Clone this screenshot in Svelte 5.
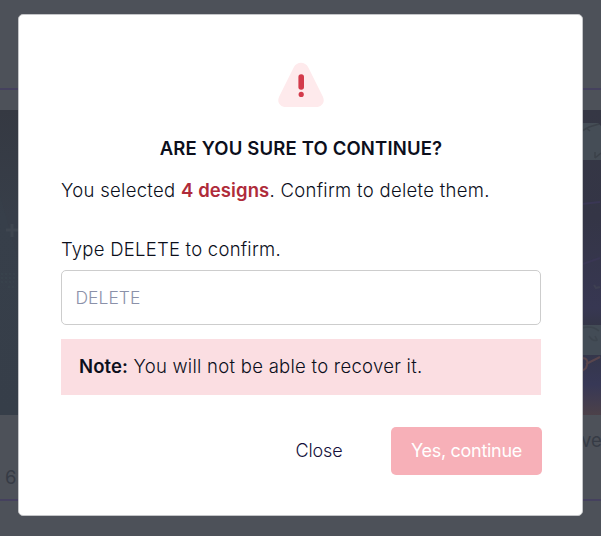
<script>
  let count = 4;
  let keyword = 'DELETE';
  let typed = '';

  $: confirmed = typed === keyword;
</script>

<div class="screen">
  <div class="page" aria-hidden="true">
    <div class="toolbar"></div>
    <div class="cards">
      <div class="card">
        <div class="thumb left">
          <svg width="20" height="305" viewBox="0 0 20 305" fill="none">
            <path d="M0 85L18 150V305H0z" fill="#3a4650" opacity=".12" />
            <path d="M6 120h12M12 114v13" stroke="#3f4650" stroke-width="3" />
            <path d="M1 164h15M1 168h15M1 172h13M8 177h8" stroke="#3a464e" stroke-dasharray="2 2" />
          </svg>
        </div>
        <div class="meta count">6</div>
      </div>
      <div class="card">
        <div class="thumb right">
          <svg width="20" height="305" viewBox="0 0 20 305" fill="none">
            <path d="M1 13h16l3 3v34H1z" fill="#454d56" />
            <path d="M1 21l7-4 10-3M5 18l4 3M20 43l-6 5M14 42v6" stroke="#3b4149" stroke-width="1.5" />
            <path d="M1 94l18-2M2 154l17-6" stroke="#3a3754" stroke-width="2" />
            <path d="M13 175l2 3 4-1" stroke="#3e4052" stroke-width="2" />
            <path d="M1 215h19v30H1z" fill="#434c56" />
            <path d="M1 218q10-3 17 3M8 226q4 6 8 4l-2-4" stroke="#3d454e" stroke-width="1.5" />
            <path d="M1 248q8 0 4 10l-4 3M5 254l14-7" stroke="#59464d" stroke-width="2" />
          </svg>
        </div>
        <div class="meta name">ve</div>
      </div>
    </div>
    <div class="bottom"></div>
  </div>

  <div class="modal" role="dialog" aria-modal="true" aria-labelledby="title">
    <svg class="warning" width="46" height="46" viewBox="0 0 46 46">
      <path d="M15.8 5.2C18.6-.8 27.4-.8 30.2 5.2L44.8 34.5C47.5 40 44 45 38 45H8C2 45-1.5 40 1.2 34.5z" fill="#feeaec" />
      <rect x="20.4" y="12.2" width="5.6" height="15.6" rx="2.7" fill="#d33b4b" />
      <circle cx="23.2" cy="32.4" r="2.6" fill="#d33b4b" />
    </svg>
    <h2 id="title">ARE YOU SURE TO CONTINUE?</h2>
    <p class="summary">You selected <strong>{count} designs</strong>. Confirm to delete them.</p>
    <label for="confirm">Type {keyword} to confirm.</label>
    <input id="confirm" type="text" placeholder={keyword} bind:value={typed} />
    <p class="note"><b>Note:</b> You will not be able to recover it.</p>
    <div class="actions">
      <button class="close" type="button">Close</button>
      <button class="submit" type="button" class:confirmed disabled={!confirmed}>Yes, continue</button>
    </div>
  </div>
</div>

<style>
  :global(body) { margin: 0; }
  .screen {
    position: relative; width: 601px; height: 536px; overflow: hidden;
    background: #4d5159;
    font-family: Inter, sans-serif; font-size: 18.5px; font-weight: 300; color: #0c0f1c;
  }
  .page { display: flex; flex-direction: column; height: 100%; }
  .toolbar { height: 88px; }
  .cards {
    display: flex; justify-content: space-between; height: 389px;
    padding-top: 20px; border-top: 2px solid #45415e; border-bottom: 2px solid #45415e;
  }
  .card { width: 20px; }
  .thumb { height: 305px; }
  .thumb svg { display: block; }
  .left { background: linear-gradient(#353942, #373e49 35%, #363d48); }
  .right { background: linear-gradient(#353744, #343546 35%, #373752 65%, #333543 73%, #373856 90%, #4c4149); }
  .meta { line-height: 24px; font-weight: 400; color: #363b45; }
  .count { padding: 50px 0 0 5px; }
  .name { padding-top: 13px; font-size: 18.5px; text-align: right; }
  .bottom { height: 35px; }

  .modal {
    position: absolute; top: 14px; left: 18px; box-sizing: border-box;
    width: 565px; height: 502px; padding: 47px 41px 0 42px;
    display: flex; flex-direction: column;
    background: #fff; border: 1px solid #c4c5c8; border-radius: 5px;
  }
  .warning { flex: none; align-self: center; }
  h2 {
    margin: 28px 0 0; line-height: 24px; text-align: center;
    font-size: 18.5px; font-weight: 600; letter-spacing: 0.16px;
  }
  p { margin: 0; }
  .summary { margin-top: 16px; line-height: 28px; letter-spacing: 0.3px; }
  strong { font-weight: 600; letter-spacing: 0.1px; color: #af2b3a; }
  label { margin-top: 31px; line-height: 28px; letter-spacing: 0.24px; }
  input {
    box-sizing: border-box; width: 480px; height: 55px; margin-top: 7px; padding: 0 13.5px;
    font: inherit; font-size: 17.5px; color: inherit;
    background: #fff; border: 1px solid #cdcdcd; border-radius: 5px; outline: none;
  }
  input::placeholder { color: #8b91a9; opacity: 1; }
  .note {
    box-sizing: border-box; width: 480px; height: 56px; margin-top: 14px; padding: 0 18px;
    line-height: 55px; letter-spacing: 0.27px; background: #fbdee2;
  }
  b { font-weight: 600; letter-spacing: 0.1px; }
  .actions { display: flex; justify-content: flex-end; margin: 32px -1px 0 0; }
  button {
    height: 48px; padding: 0 0 2px; border: 0; border-radius: 5px;
    font: inherit; font-size: 18px;
  }
  .close { width: 144px; letter-spacing: -0.1px; background: none; color: #16113b; }
  .submit { width: 151px; font-weight: 400; letter-spacing: -0.3px; background: #f7b0b8; color: #fff; }
  .confirmed { background: #d23345; }
</style>
